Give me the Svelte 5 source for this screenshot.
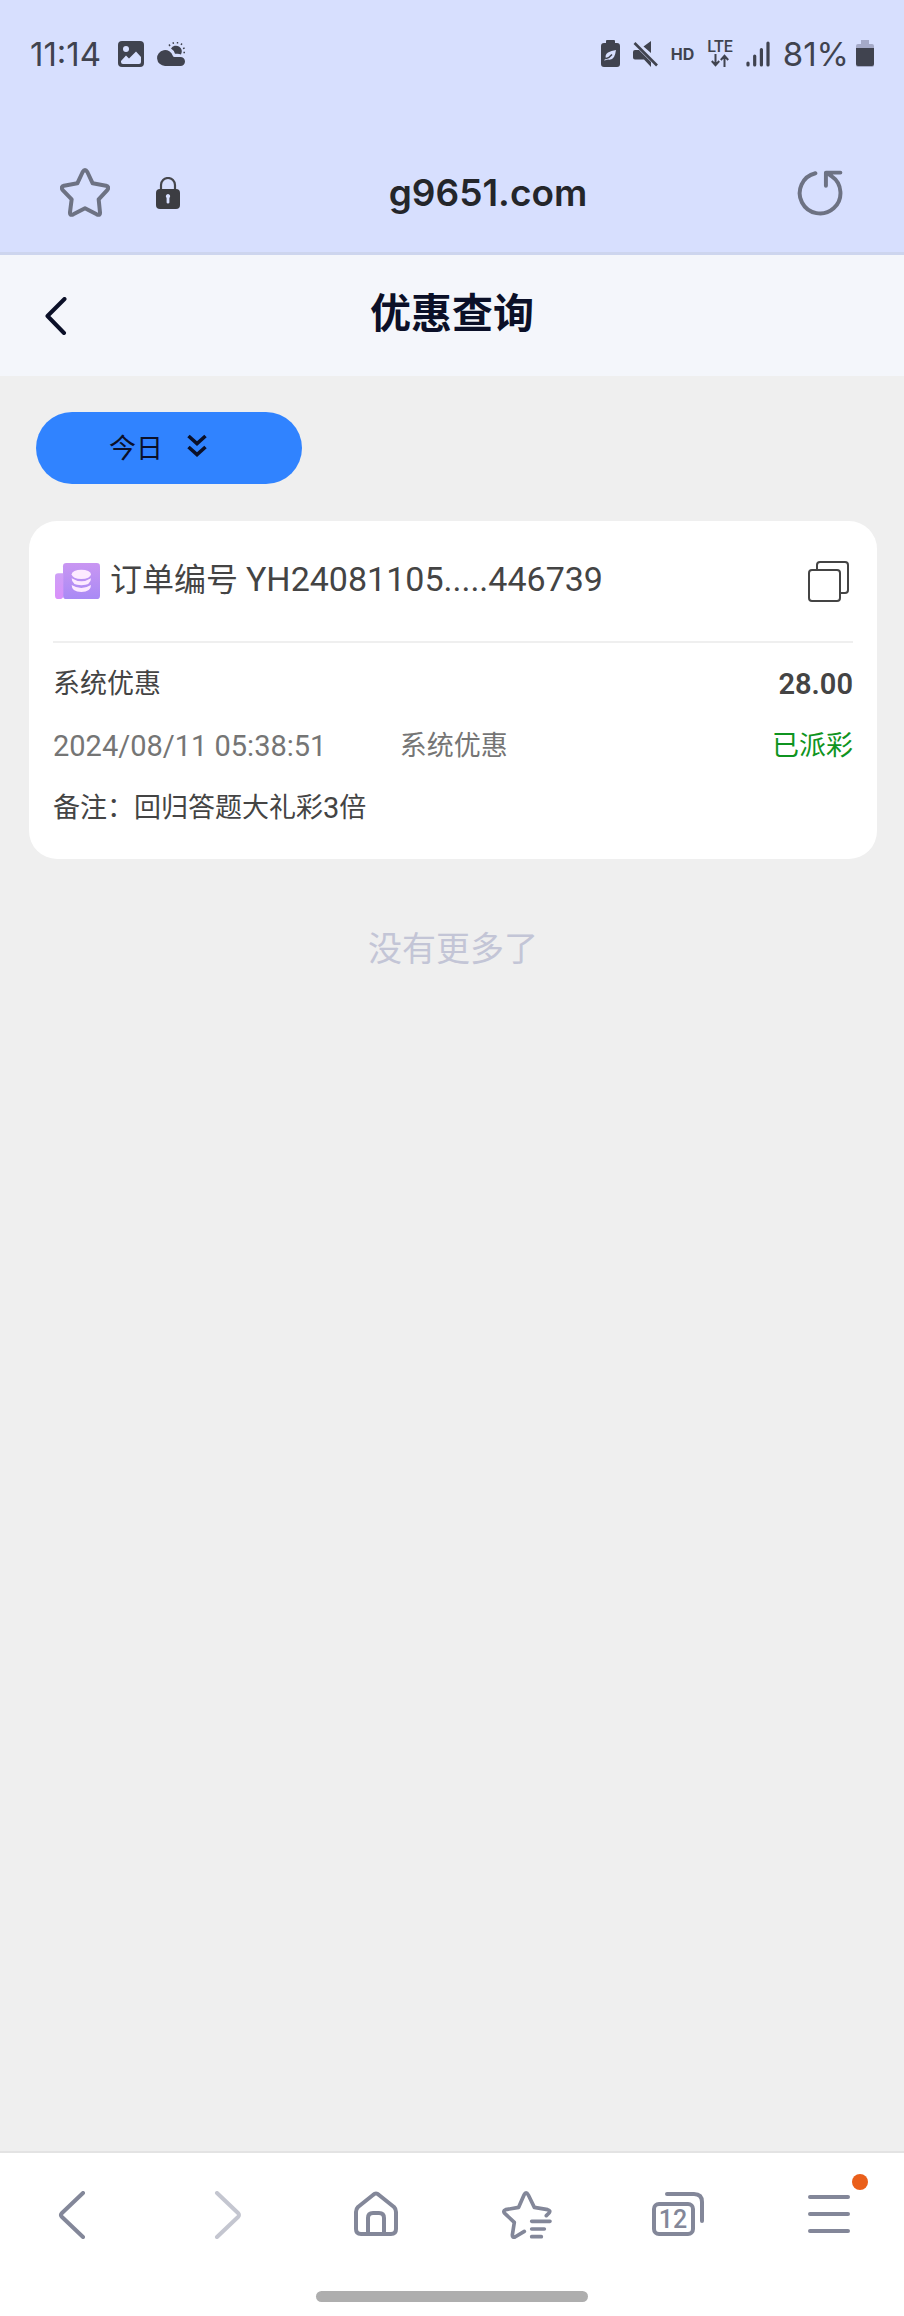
<script lang="ts">
  type Order = {
    id: string;
    kind: string;
    amount: string;
    time: string;
    source: string;
    status: string;
    remark: string;
    multiple: string;
  };

  const orders: Order[] = [
    {
      id: 'YH24081105.....446739',
      kind: '系统优惠',
      amount: '28.00',
      time: '2024/08/11 05:38:51',
      source: '系统优惠',
      status: '已派彩',
      remark: '回归答题大礼彩',
      multiple: '3'
    }
  ];

  const tabCount = 12;
</script>

<div class="screen">
  <header class="browser">
    <div class="status">
      <div class="status-left">
        <span class="clock">11:14</span>
        <svg width="26" height="26" viewBox="0 0 26 26" aria-hidden="true">
          <rect width="26" height="26" rx="4" fill="#40434f" />
          <circle cx="8" cy="8" r="3" fill="#d7dffe" />
          <path d="M3 20 L8 14.5 L11 17.5 L18 10.5 L23 16 V21 Q23 23 21 23 H5 Q3 23 3 21 Z" fill="#d7dffe" />
        </svg>
        <svg width="28" height="24" viewBox="0 0 28 24" aria-hidden="true">
          <g stroke="#40434f" stroke-width="1.4">
            <path d="M12 2.500 l1 1.500 M16 .3 l.5 1.600 M20.500 0 v1.500 M25 1.500 l-1 1.400 M27.600 6 l-1.600 .6 M28 10.500 h-1.600" />
          </g>
          <path d="M14 6.500 a5.800 5.800 0 1 1 10 6 q-1.500 -.7 -3.500 -.7 h-2.500 q-1 -3.500 -4 -5.300z" fill="#40434f" />
          <path d="M8 24 a8 8 0 1 1 7.800 -10.200 q.4 1.200 1.700 1.200 h6 a4.500 4.500 0 0 1 0 9z" fill="#40434f" />
        </svg>
      </div>
      <div class="status-right">
        <svg width="19" height="27" viewBox="0 0 19 27" aria-hidden="true">
          <path d="M6 0 h7 q1 0 1 1 v2 h2 q3 0 3 3 v18 q0 3 -3 3 h-13 q-3 0 -3 -3 v-18 q0 -3 3 -3 h2 v-2 q0 -1 1 -1z" fill="#40434f" />
          <path d="M15 10 q-5 .5 -8 2.500 q-3.500 2.500 -2 6 q-1.500 1 -2 2 q3 -.5 4 -1 q4 .8 6 -2.500 q1.500 -3 2 -7z" fill="#d7dffe" />
          <path d="M4.500 18.800 q4 -1 6.500 -4.300" stroke="#40434f" stroke-width="1.400" fill="none" />
        </svg>
        <svg width="25" height="26" viewBox="0 0 25 26" aria-hidden="true">
          <path d="M18 0 v12 l-7.500 -6.500z M2 9 h4 l12 12 v5 l-7 -7.500 h-9 q-2 0 -2 -2 v-5.500 q0 -2 2 -2z" fill="#40434f" />
          <path d="M1.500 2 L24 24.500" stroke="#40434f" stroke-width="2.600" />
        </svg>
        <span class="hd">HD</span>
        <div class="lte">
          <span>LTE</span>
          <svg width="18" height="13" viewBox="0 0 18 13" fill="none" stroke="#40434f" stroke-width="2" aria-hidden="true">
            <path d="M4.500 0 v11 M.8 7 l3.700 4.200 l3.700 -4.200 M13.500 13 v-11 M9.800 6 l3.700 -4.200 l3.700 4.200" />
          </svg>
        </div>
        <svg width="24" height="26" viewBox="0 0 24 26" stroke="#40434f" stroke-width="3.200" stroke-linecap="round" aria-hidden="true">
          <path d="M2 22 v2 M8.700 15 v9 M15.400 8.500 v15.500 M22 2 v22" />
        </svg>
        <span class="percent">81%</span>
        <svg width="18" height="27" viewBox="0 0 18 27" aria-hidden="true">
          <path d="M5 0 h8 v4 h3 q2 0 2 2 v19 q0 2 -2 2 h-14 q-2 0 -2 -2 v-19 q0 -2 2 -2 h3z" fill="#a5aac8" />
          <path d="M0 8 h18 v16 q0 2 -2 2 h-14 q-2 0 -2 -2z" fill="#40434f" />
        </svg>
      </div>
    </div>

    <div class="address">
      <div class="address-side">
        <button aria-label="收藏">
          <svg width="50" height="50" viewBox="0 0 150 150" fill="none" stroke="#6d7283" stroke-width="12" stroke-linejoin="round" aria-hidden="true">
            <path d="M68 12 Q75 0 82 12 L98 46 L138 53 Q150 57 141 67 L116 94 L120 133 Q121 144 110 139 L75 121 L40 139 Q29 144 30 133 L35 94 L9 67 Q0 57 12 53 L52 46 Z" />
          </svg>
        </button>
        <svg width="24" height="32" viewBox="0 0 24 32" aria-hidden="true">
          <path d="M5 14 V8 a7 7 0 0 1 14 0 v6" fill="none" stroke="#45464c" stroke-width="2.200" />
          <rect y="12" width="24" height="20" rx="4" fill="#3c3d42" />
          <path d="M12 17 a2.300 2.300 0 0 1 1.400 4 v4.500 q0 1 -1.400 1 t-1.400 -1 v-4.500 a2.300 2.300 0 0 1 1.400 -4z" fill="#d7dffe" />
        </svg>
      </div>
      <span class="url">g9651.com</span>
      <button aria-label="刷新">
        <svg width="48" height="48" viewBox="0 0 146 146" fill="none" stroke="#6d7283" stroke-width="12" stroke-linecap="round" stroke-linejoin="round" aria-hidden="true">
          <path d="M59 13 A62 62 0 1 0 108 22 Q101 16 92 12 M135 11 H91 V51" />
        </svg>
      </button>
    </div>
  </header>

  <nav class="page-head">
    <button aria-label="返回">
      <svg width="22" height="38" viewBox="0 0 22 38" fill="none" stroke="#0b1028" stroke-width="4" stroke-linecap="round" stroke-linejoin="round" aria-hidden="true">
        <path d="M19.500 2 L2.500 19 L19 36" />
      </svg>
    </button>
    <h1>优惠查询</h1>
  </nav>

  <main>
    <button class="range">
      今日
      <svg width="20" height="24" viewBox="0 0 20 24" fill="none" stroke="#0b1028" stroke-width="3.600" aria-hidden="true">
        <path d="M1.500 2 L10 9.500 L18.500 2 M1.500 13 L10 20.500 L18.500 13" />
      </svg>
    </button>

    {#each orders as order (order.id)}
      <article class="card">
        <div class="card-head">
          <svg width="45" height="36" viewBox="0 0 135 108" aria-hidden="true">
            <defs>
              <linearGradient id="box" x1="0" y1="0" x2="0" y2="1">
                <stop offset="0" stop-color="#c996f2" />
                <stop offset="1" stop-color="#a98af5" />
              </linearGradient>
              <linearGradient id="fold" x1="0" y1="0" x2="0" y2="1">
                <stop offset="0" stop-color="#cda0f6" />
                <stop offset="1" stop-color="#da90fa" />
              </linearGradient>
            </defs>
            <rect x="24" width="111" height="108" rx="10" fill="url(#box)" />
            <path d="M10 31 H25 V98 Q25 108 13 108 H10 Q0 108 0 98 V41 Q0 31 10 31z" fill="url(#fold)" />
            <g fill="#fdeaff">
              <ellipse cx="79" cy="34" rx="29" ry="14" />
              <path d="M50 46 Q79 64 108 46 Q108 67 79 67 Q50 67 50 46z" />
              <path d="M50 66 Q79 84 108 66 Q108 87 79 87 Q50 87 50 66z" />
            </g>
          </svg>
          <h2>订单编号 <span>{order.id}</span></h2>
          <button aria-label="复制订单编号">
            <svg width="41" height="41" viewBox="0 0 41 41" fill="none" stroke="#444" stroke-width="2" aria-hidden="true">
              <path d="M9 8 V4 Q9 1 12 1 H37 Q40 1 40 4 V29 Q40 32 37 32 H33" />
              <rect x="1" y="9" width="31" height="31" rx="3" />
            </svg>
          </button>
        </div>
        <div class="card-body">
          <div class="row">
            <span>{order.kind}</span>
            <strong>{order.amount}</strong>
          </div>
          <div class="row detail">
            <time>{order.time}</time>
            <span>{order.source}</span>
            <span class="paid">{order.status}</span>
          </div>
          <p class="row">备注：{order.remark}<span class="num">{order.multiple}</span>倍</p>
        </div>
      </article>
    {/each}

    <p class="end-note">没有更多了</p>
  </main>

  <footer>
    <div class="tools">
      <button aria-label="后退">
        <svg width="48" height="48" viewBox="0 0 48 48" aria-hidden="true">
          <path d="M32 2 L11 22 Q9 24 11 26 L32 46" />
        </svg>
      </button>
      <button aria-label="前进" class="dim">
        <svg width="48" height="48" viewBox="0 0 48 48" aria-hidden="true">
          <path d="M15 2 L36 22 Q38 24 36 26 L15 46" />
        </svg>
      </button>
      <button aria-label="主页">
        <svg width="48" height="48" viewBox="0 0 48 48" aria-hidden="true">
          <path d="M20 4 Q23 1 26 4 L41 16 Q43 18 43 21 V38 Q43 43 38 43 H8 Q3 43 3 38 V21 Q3 18 5 16 Z M15 43 V27 Q15 22 20 22 H26 Q31 22 31 27 V43" />
        </svg>
      </button>
      <button aria-label="书签">
        <svg width="50" height="48" viewBox="0 0 150 144" aria-hidden="true">
          <path class="scaled" d="M66 12 Q72 -1 79 12 L97 49 L137 56 Q147 59 141 66 L133 74 M66 12 L50 49 L11 56 Q1 60 9 68 L37 94 L31 132 Q31 141 39 138 L67 121 M89 91 H144 M89 114 H127 M89 137 H118" />
        </svg>
      </button>
      <button aria-label="标签页">
        <svg width="52" height="46" viewBox="0 0 52 46" aria-hidden="true">
          <rect x="2" y="12" width="39" height="30" rx="5" />
          <path d="M15 2 H42 Q50 2 50 10 V29" />
          <text x="21" y="36" text-anchor="middle">{tabCount}</text>
        </svg>
      </button>
      <button aria-label="菜单" class="menu">
        <svg width="42" height="42" viewBox="0 0 42 42" aria-hidden="true">
          <path d="M2 3 H40 M2 20 H40 M2 37 H40" />
        </svg>
        <i class="dot"></i>
      </button>
    </div>
    <div class="handle"></div>
  </footer>
</div>

<style>
  :global(body) {
    margin: 0;
    background: #efefef;
  }

  .screen {
    display: flex;
    flex-direction: column;
    min-height: 100vh;
    font-family: Roboto, 'Noto Sans CJK SC', sans-serif;
    color: #444;
  }

  button {
    display: flex;
    align-items: center;
    justify-content: center;
    padding: 0;
    border: 0;
    background: none;
    font: inherit;
    color: inherit;
    cursor: pointer;
  }

  svg {
    display: block;
    flex: none;
  }

  h1,
  h2,
  p {
    margin: 0;
  }

  /* Phone status line and address bar share one tinted block */
  .browser {
    background: #d7dffe;
    border-bottom: 3px solid #cdd5ee;
    font-family: Inter, sans-serif;
  }

  .status {
    display: flex;
    align-items: center;
    justify-content: space-between;
    height: 107px;
    padding: 0 30px;
    color: #40434f;
  }

  .status-left,
  .status-right {
    display: flex;
    align-items: center;
    gap: 13px;
  }

  .clock,
  .percent {
    font-size: 33px;
    line-height: 40px;
    font-weight: 400;
  }

  .clock {
    margin-right: 4px;
  }

  .percent {
    margin-right: -6px;
  }

  .hd {
    font-size: 16px;
    font-weight: 700;
  }

  .lte {
    display: flex;
    flex-direction: column;
    align-items: center;
    font-family: Roboto, sans-serif;
    font-size: 16px;
    line-height: 14px;
    font-weight: 500;
  }

  .address {
    display: flex;
    align-items: center;
    height: 116px;
    padding: 28px 60px 1px;
  }

  .address-side {
    display: flex;
    align-items: center;
    gap: 46px;
  }

  .url {
    flex: 1;
    font-size: 37px;
    line-height: 48px;
    font-weight: 600;
    color: #24262a;
    text-align: center;
  }

  .page-head {
    display: grid;
    grid-template-columns: 1fr auto 1fr;
    align-items: center;
    height: 121px;
    padding: 0 45px;
    background: #f4f6fb;
    color: #0b1028;
  }

  .page-head button {
    justify-self: start;
  }

  h1 {
    padding-bottom: 4px;
    font-size: 41px;
    line-height: 60px;
    font-weight: 700;
  }

  main {
    flex: 1;
    padding: 36px 27px 36px 29px;
  }

  .range {
    gap: 24px;
    height: 72px;
    margin: 0 7px 37px;
    padding: 0 95px 4px 73px;
    border-radius: 36px;
    background: #3083ff;
    color: #0b1028;
    font-size: 27px;
  }

  .card {
    padding: 0 24px;
    border-radius: 28px;
    background: #fff;
  }

  .card-head {
    display: flex;
    align-items: center;
    gap: 10px;
    height: 120px;
    padding: 0 4px 0 2px;
    border-bottom: 2px solid #efefef;
  }

  h2 {
    flex: 1;
    padding-bottom: 4px;
    font-size: 32px;
    line-height: 44px;
    font-weight: 400;
  }

  h2 span {
    font-size: 34px;
  }

  .card-body {
    padding: 10px 0 20px;
  }

  .row {
    display: flex;
    align-items: center;
    justify-content: space-between;
    font-size: 27px;
    line-height: 62px;
  }

  p.row {
    justify-content: flex-start;
  }

  strong,
  time,
  .num {
    font-size: 29px;
  }

  strong {
    font-weight: 600;
  }

  .detail {
    display: grid;
    grid-template-columns: 13fr 7fr 10fr;
    color: #757575;
  }

  .paid {
    color: #0f9420;
    text-align: right;
  }

  .end-note {
    padding-top: 66px;
    font-size: 34px;
    line-height: 48px;
    color: #c3c5d6;
    text-align: center;
  }

  footer {
    border-top: 2px solid #e3e3e3;
    background: #fff;
  }

  .tools {
    display: grid;
    grid-template-columns: repeat(6, 1fr);
    height: 123px;
    color: #838799;
  }

  .tools svg {
    fill: none;
    stroke: currentColor;
    stroke-width: 4;
    stroke-linecap: round;
    stroke-linejoin: round;
  }

  .tools .scaled {
    stroke-width: 11;
  }

  .tools text {
    fill: currentColor;
    stroke: none;
    font-size: 25px;
    font-weight: 500;
  }

  .tools .dim {
    color: #c4c6d0;
  }

  .menu {
    position: relative;
  }

  .dot {
    position: absolute;
    top: 21px;
    left: calc(50% + 23px);
    width: 16px;
    height: 16px;
    border-radius: 50%;
    background: #ea5f1a;
  }

  .handle {
    width: 30%;
    height: 11px;
    margin: 15px auto 14px;
    border-radius: 6px;
    background: #aeaeae;
  }
</style>
